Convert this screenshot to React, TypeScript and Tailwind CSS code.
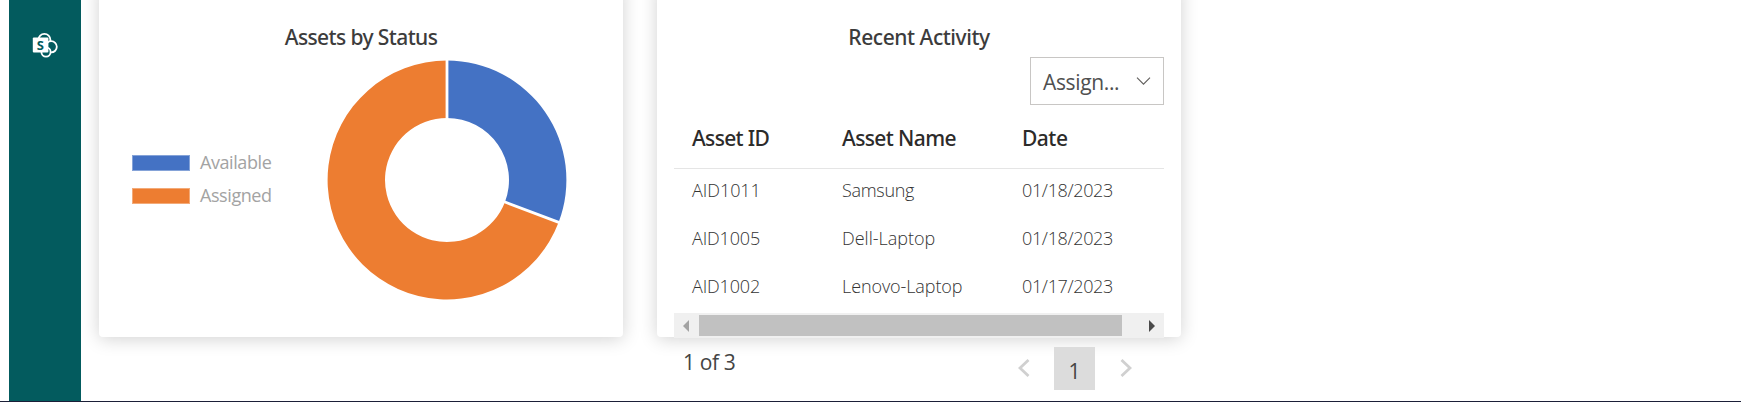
import type { ReactNode } from "react";

const activity = [
  { id: "AID1011", name: "Samsung", date: "01/18/2023", idCls: "tracking-[-0.05px]", cls: "tracking-[-0.3px]" },
  { id: "AID1005", name: "Dell-Laptop", date: "01/18/2023", idCls: "tracking-[-0.15px]", cls: "" },
  { id: "AID1002", name: "Lenovo-Laptop", date: "01/17/2023", idCls: "tracking-[-0.15px]", cls: "tracking-[-0.1px]" },
];

function SharePointIcon() {
  return (
    <svg className="size-[26px]" viewBox="32 32 26 26" fill="none">
      <g stroke="#fff" strokeWidth="1.8">
        <circle cx="44.4" cy="39.8" r="6" />
        <circle cx="51.2" cy="46.8" r="5.6" fill="#035b5e" />
        <circle cx="46" cy="52" r="4.6" fill="#035b5e" />
      </g>
      <rect x="32.8" y="37.6" width="15.6" height="14.8" rx="1" fill="#fff" />
      <text x="40.4" y="49.8" textAnchor="middle" fontSize="13" fontWeight="700" fontFamily="Open Sans, sans-serif" fill="#035b5e">S</text>
    </svg>
  );
}

function Donut() {
  const a = (Math.PI * 2 * 4) / 13;
  const c = 120;
  const p = (r: number) => `${c + r * Math.sin(a)} ${c - r * Math.cos(a)}`;
  const R = 119.4;
  const r = 62;
  return (
    <svg className="size-[240px]" viewBox="0 0 240 240">
      <path fill="#4472c4" d={`M${c} ${c - R}A${R} ${R} 0 0 1 ${p(R)}L${p(r)}A${r} ${r} 0 0 0 ${c} ${c - r}Z`} />
      <path fill="#ed7d31" d={`M${p(R)}A${R} ${R} 0 1 1 ${c} ${c - R}V${c - r}A${r} ${r} 0 1 0 ${p(r)}Z`} />
      <path stroke="#fff" strokeWidth="2.8" fill="none" d={`M${c} 0V${c - r + 2}M${p(121)}L${p(r - 2)}`} />
    </svg>
  );
}

function Card({ title, titleClass, children }: { title: string; titleClass: string; children: ReactNode }) {
  return (
    <section className="-mt-5 flex h-[357px] w-[524px] shrink-0 flex-col rounded bg-white px-[17px] pt-[42px] shadow-[0_2px_18px_rgba(0,0,0,0.18)]">
      <h2 className={`text-center font-['Noto_Sans',sans-serif] text-[21px] leading-[30px] font-medium text-[#3c3c3c] ${titleClass}`}>{title}</h2>
      {children}
    </section>
  );
}

function Legend({ label, color }: { label: string; color: string }) {
  return (
    <div className="flex h-[33px] items-center gap-[10px]">
      <span className={`mt-[2px] h-4 w-[58px] border border-white/35 bg-clip-border ${color}`} />
      <span className="text-[18px] leading-[24px] tracking-[-0.42px] text-[#a3a3a3]">{label}</span>
    </div>
  );
}

export default function App() {
  return (
    <div className="flex h-[402px] w-[1741px] flex-col overflow-hidden bg-white font-['Open_Sans',sans-serif]">
      <div className="flex h-[401px] pl-[9px]">
        <nav className="flex w-[72px] shrink-0 justify-center bg-[#035b5e] pt-8">
          <SharePointIcon />
        </nav>
        <main className="flex gap-[34px] overflow-hidden pr-8 pl-[18px]">
          <Card title="Assets by Status" titleClass="tracking-[-0.6px]">
            <div className="flex pl-4">
              <div className="flex w-[195px] flex-col pt-[93px]">
                <Legend label="Available" color="bg-[#4472c4]" />
                <Legend label="Assigned" color="bg-[#ed7d31]" />
              </div>
              <div className="pt-[8px]">
                <Donut />
              </div>
            </div>
          </Card>
          <Card title="Recent Activity" titleClass="tracking-[-0.45px]">
            <div className="mt-[5px] ml-auto flex h-12 w-[134px] shrink-0 items-center justify-between border border-[#c8c6c4] pr-3 pl-3">
              <span className="pt-px text-[21px] leading-7 tracking-[-0.35px] text-[#505050]">Assign...</span>
              <svg className="h-2 w-[15px]" viewBox="0 0 15 8" fill="none" stroke="#605e5c" strokeWidth="1.1">
                <path d="M1 .7l6.500 6.500 6.500-6.500" />
              </svg>
            </div>
            <div className="mt-[3px] grid h-[61px] shrink-0 grid-cols-[150px_180px_1fr] items-center border-b border-[#e5e5e5] pl-[18px] font-['Noto_Sans',sans-serif] text-[21px] leading-[30px] font-medium text-[#2c2b2a]">
              <span className="tracking-[-0.65px]">Asset ID</span>
              <span className="tracking-[-0.6px]">Asset Name</span>
              <span className="tracking-[-0.5px]">Date</span>
            </div>
            <div className="-mt-[3px] text-[18px] font-light text-[#333]">
              {activity.map((row) => (
                <div key={row.id} className="grid h-12 grid-cols-[150px_180px_1fr] items-center pl-[18px]">
                  <span className={row.idCls}>{row.id}</span>
                  <span className={row.cls}>{row.name}</span>
                  <span className="tracking-[-0.35px]">{row.date}</span>
                </div>
              ))}
            </div>
            <div className="mt-[3px] flex h-[25px] shrink-0 items-center bg-[#f0f0f0] pl-[9px]">
              <svg className="h-3 w-[6px]" viewBox="0 0 6 12"><path d="M6 0v12L0 6z" fill="#a3a3a3" /></svg>
              <div className="ml-[10px] h-[21px] w-[423px] bg-[#c1c1c1]" />
              <svg className="ml-[27px] h-3 w-[6px]" viewBox="0 0 6 12"><path d="M0 0v12l6-6z" fill="#4a4a4a" /></svg>
            </div>
            <div className="mt-[9px] flex shrink-0 items-start text-[21px] leading-[30px] text-[#444]">
              <span className="ml-[9px] tracking-[-0.35px]">1 of 3</span>
              <div className="ml-auto flex h-[43px] items-center pr-8">
                <svg className="-mt-px h-[18px] w-3" viewBox="0 0 12 18" fill="none" stroke="#d0d0d0" strokeWidth="2.8"><path d="M10.500 1L2 9l8.500 8" /></svg>
                <span className="mr-[25px] ml-6 flex h-[43px] w-[41px] items-center justify-center bg-[#dcdcdc] pt-1">1</span>
                <svg className="-mt-px h-[18px] w-3" viewBox="0 0 12 18" fill="none" stroke="#d0d0d0" strokeWidth="2.8"><path d="M1.500 1L10 9l-8.500 8" /></svg>
              </div>
            </div>
          </Card>
        </main>
      </div>
      <div className="h-px bg-[#1b1f38]" />
    </div>
  );
}
